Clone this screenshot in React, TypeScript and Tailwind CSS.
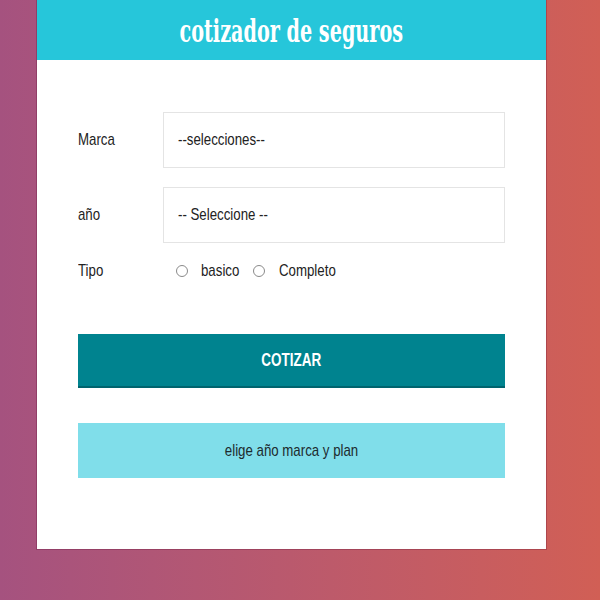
import React, { useState } from "react";

const body = "font-['Liberation_Sans',Arial,sans-serif]";
// reference text is horizontally condensed
const narrow = "inline-block whitespace-nowrap scale-x-[0.78]";

export default function App() {
  const [tipo, setTipo] = useState<"basico" | "completo" | "">("");

  return (
    <div className={`min-h-[600px] w-full bg-linear-to-r from-[#a5527f] to-[#d15f55] ${body}`}>
      <div className="ml-[37px] w-[509px] h-[549px] bg-white shadow-[0_0_0_1px_rgba(80,0,40,0.25)]">
        <header className="h-[60px] bg-[#26c6da] flex items-center justify-center">
          <h1 className="text-white font-bold text-[32px] leading-none pt-[2px] whitespace-nowrap inline-block scale-x-[0.6] font-['DejaVu_Serif',serif]">
            cotizador de seguros
          </h1>
        </header>

        <form className="px-[41px] pt-[52px] flex flex-col text-[17px] text-[#222]">
          <div className="flex items-center">
            <label className="w-[85px]">
              <span className={`${narrow} origin-left`}>Marca</span>
            </label>
            <div className="flex-1 h-[56px] border border-[#e4e4e4] flex items-center px-[14px]">
              <span className={`${narrow} origin-left`}>--selecciones--</span>
            </div>
          </div>

          <div className="flex items-center mt-[19px]">
            <label className="w-[85px]">
              <span className={`${narrow} origin-left`}>año</span>
            </label>
            <div className="flex-1 h-[56px] border border-[#e4e4e4] flex items-center px-[14px]">
              <span className={`${narrow} origin-left`}>-- Seleccione --</span>
            </div>
          </div>

          <div className="flex items-center mt-[18px] h-[20px]">
            <label className="w-[85px]">
              <span className={`${narrow} origin-left`}>Tipo</span>
            </label>
            <div className="flex items-center pl-[13px]">
              <button
                type="button"
                onClick={() => setTipo("basico")}
                className="w-[12px] h-[12px] rounded-full border border-[#8a8a8a] flex items-center justify-center"
              >
                {tipo === "basico" && <span className="w-[6px] h-[6px] rounded-full bg-[#333]" />}
              </button>
              <span className={`ml-[13px] w-[39px] ${narrow} origin-left`}>basico</span>
              <button
                type="button"
                onClick={() => setTipo("completo")}
                className="ml-[13px] w-[12px] h-[12px] rounded-full border border-[#8a8a8a] flex items-center justify-center"
              >
                {tipo === "completo" && <span className="w-[6px] h-[6px] rounded-full bg-[#333]" />}
              </button>
              <span className={`ml-[14px] w-[57px] ${narrow} origin-left`}>Completo</span>
            </div>
          </div>

          <button
            type="button"
            className="mt-[53px] h-[54px] bg-[#00838f] border-b-2 border-[#00646e] text-white font-bold text-[19px] uppercase"
          >
            <span className="inline-block scale-x-[0.71]">Cotizar</span>
          </button>

          <div className="mt-[35px] h-[55px] bg-[#80deea] flex items-center justify-center text-[17px] text-[#1d2b2e]">
            <span className={narrow}>elige año marca y plan</span>
          </div>
        </form>
      </div>
    </div>
  );
}
